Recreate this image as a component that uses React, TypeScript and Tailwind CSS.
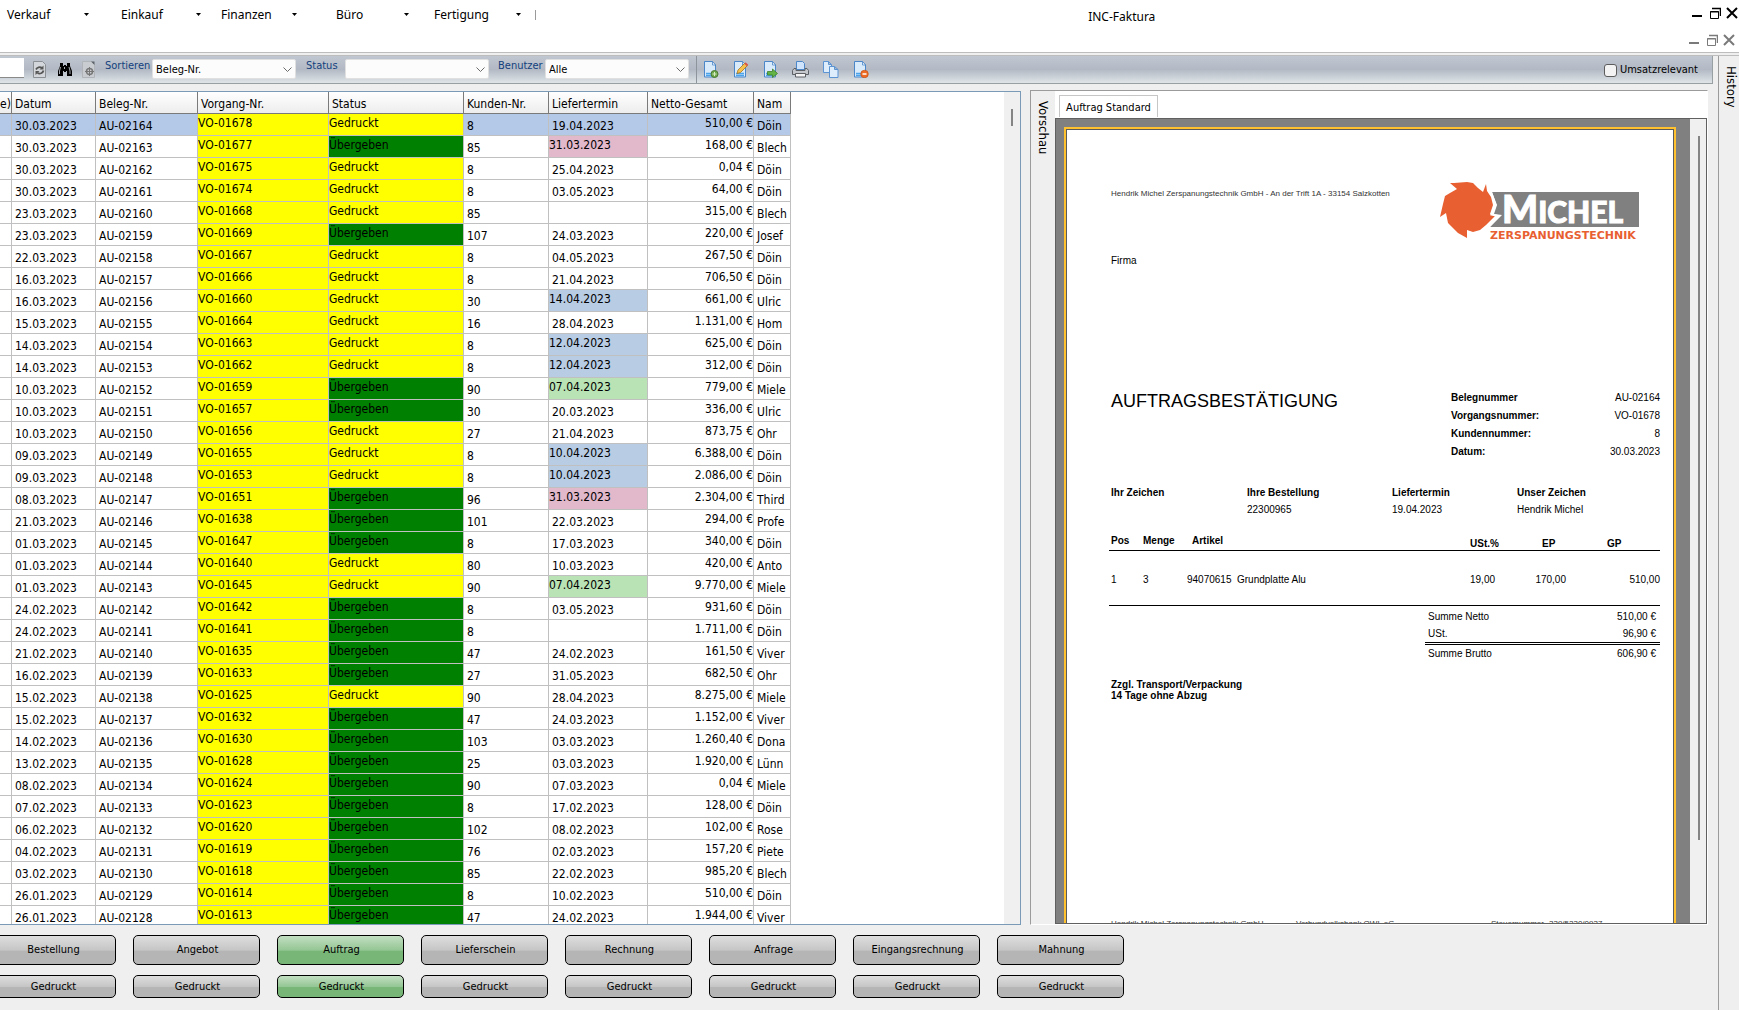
import type { ReactNode } from 'react';

type Row = [string, string, string, 'G' | 'U', string, string, string, string, ('pink' | 'blue' | 'green')?];

const ROWS: Row[] = [
  ['30.03.2023', '02164', '01678', 'G', '8', '19.04.2023', '510,00', 'Döin'],
  ['30.03.2023', '02163', '01677', 'U', '85', '31.03.2023', '168,00', 'Blech', 'pink'],
  ['30.03.2023', '02162', '01675', 'G', '8', '25.04.2023', '0,04', 'Döin'],
  ['30.03.2023', '02161', '01674', 'G', '8', '03.05.2023', '64,00', 'Döin'],
  ['23.03.2023', '02160', '01668', 'G', '85', '', '315,00', 'Blech'],
  ['23.03.2023', '02159', '01669', 'U', '107', '24.03.2023', '220,00', 'Josef'],
  ['22.03.2023', '02158', '01667', 'G', '8', '04.05.2023', '267,50', 'Döin'],
  ['16.03.2023', '02157', '01666', 'G', '8', '21.04.2023', '706,50', 'Döin'],
  ['16.03.2023', '02156', '01660', 'G', '30', '14.04.2023', '661,00', 'Ulric', 'blue'],
  ['15.03.2023', '02155', '01664', 'G', '16', '28.04.2023', '1.131,00', 'Hom'],
  ['14.03.2023', '02154', '01663', 'G', '8', '12.04.2023', '625,00', 'Döin', 'blue'],
  ['14.03.2023', '02153', '01662', 'G', '8', '12.04.2023', '312,00', 'Döin', 'blue'],
  ['10.03.2023', '02152', '01659', 'U', '90', '07.04.2023', '779,00', 'Miele', 'green'],
  ['10.03.2023', '02151', '01657', 'U', '30', '20.03.2023', '336,00', 'Ulric'],
  ['10.03.2023', '02150', '01656', 'G', '27', '21.04.2023', '873,75', 'Ohr'],
  ['09.03.2023', '02149', '01655', 'G', '8', '10.04.2023', '6.388,00', 'Döin', 'blue'],
  ['09.03.2023', '02148', '01653', 'G', '8', '10.04.2023', '2.086,00', 'Döin', 'blue'],
  ['08.03.2023', '02147', '01651', 'U', '96', '31.03.2023', '2.304,00', 'Third', 'pink'],
  ['21.03.2023', '02146', '01638', 'U', '101', '22.03.2023', '294,00', 'Profe'],
  ['01.03.2023', '02145', '01647', 'U', '8', '17.03.2023', '340,00', 'Döin'],
  ['01.03.2023', '02144', '01640', 'G', '80', '10.03.2023', '420,00', 'Anto'],
  ['01.03.2023', '02143', '01645', 'G', '90', '07.04.2023', '9.770,00', 'Miele', 'green'],
  ['24.02.2023', '02142', '01642', 'U', '8', '03.05.2023', '931,60', 'Döin'],
  ['24.02.2023', '02141', '01641', 'U', '8', '', '1.711,00', 'Döin'],
  ['21.02.2023', '02140', '01635', 'U', '47', '24.02.2023', '161,50', 'Viver'],
  ['16.02.2023', '02139', '01633', 'U', '27', '31.05.2023', '682,50', 'Ohr'],
  ['15.02.2023', '02138', '01625', 'G', '90', '28.04.2023', '8.275,00', 'Miele'],
  ['15.02.2023', '02137', '01632', 'U', '47', '24.03.2023', '1.152,00', 'Viver'],
  ['14.02.2023', '02136', '01630', 'U', '103', '03.03.2023', '1.260,40', 'Dona'],
  ['13.02.2023', '02135', '01628', 'U', '25', '03.03.2023', '1.920,00', 'Lünn'],
  ['08.02.2023', '02134', '01624', 'U', '90', '07.03.2023', '0,04', 'Miele'],
  ['07.02.2023', '02133', '01623', 'U', '8', '17.02.2023', '128,00', 'Döin'],
  ['06.02.2023', '02132', '01620', 'U', '102', '08.02.2023', '102,00', 'Rose'],
  ['04.02.2023', '02131', '01619', 'U', '76', '02.03.2023', '157,20', 'Piete'],
  ['03.02.2023', '02130', '01618', 'U', '85', '22.02.2023', '985,20', 'Blech'],
  ['26.01.2023', '02129', '01614', 'U', '8', '10.02.2023', '510,00', 'Döin'],
  ['26.01.2023', '02128', '01613', 'U', '47', '24.02.2023', '1.944,00', 'Viver'],
];

const DUE_STYLES = {
  pink: 'bg-[#e2b8cb]',
  blue: 'bg-[#b8cce4]',
  green: 'bg-[#b9e3b4]',
};

const CELL = 'h-[22px] border-r border-b border-[#c0c0c0] p-0 align-top leading-4 whitespace-nowrap overflow-hidden';
const PLAIN = `${CELL} pl-[3px] pt-1`;
const FLUSH = `${CELL} pt-px`;

const HEADERS = ['e)', 'Datum', 'Beleg-Nr.', 'Vorgang-Nr.', 'Status', 'Kunden-Nr.', 'Liefertermin', 'Netto-Gesamt', 'Nam'];

function OrderTable() {
  return (
    <table className="w-[791px] table-fixed border-separate border-spacing-0 text-xs">
      <colgroup>
        <col className="w-[12px]" />
        <col className="w-[84px]" />
        <col className="w-[102px]" />
        <col className="w-[131px]" />
        <col className="w-[135px]" />
        <col className="w-[85px]" />
        <col className="w-[99px]" />
        <col className="w-[106px]" />
        <col className="w-[37px]" />
      </colgroup>
      <thead>
        <tr>
          {HEADERS.map((h, i) => (
            <th key={h}
              className={`h-[22px] border-r border-b border-[#7a7a7a] bg-linear-to-b from-white to-[#ededed] p-0 pt-[2px] text-left align-middle font-normal whitespace-nowrap ${i ? 'pl-[3px]' : ''}`}>
              {h}
            </th>
          ))}
        </tr>
      </thead>
      <tbody>
        {ROWS.map(([date, doc, job, status, customer, due, net, name, mark], i) => (
          <tr key={doc} className={i === 0 ? 'bg-[#b4c9e8]' : 'bg-white'}>
            <td className={PLAIN}></td>
            <td className={PLAIN}>{date}</td>
            <td className={PLAIN}>AU-{doc}</td>
            <td className={`${FLUSH} bg-[#ffff00]`}>VO-{job}</td>
            <td className={`${FLUSH} ${status === 'G' ? 'bg-[#ffff00]' : 'bg-[#008000]'}`}>
              {status === 'G' ? 'Gedruckt' : 'Übergeben'}
            </td>
            <td className={PLAIN}>{customer}</td>
            <td className={mark ? `${FLUSH} ${DUE_STYLES[mark]}` : PLAIN}>{due}</td>
            <td className={`${FLUSH} text-right`}>{net} €</td>
            <td className={PLAIN}>{name}</td>
          </tr>
        ))}
      </tbody>
    </table>
  );
}

function Menu({ label, className }: { label: string; className: string }) {
  return (
    <button className={`flex items-center justify-between pl-[7px] ${className}`}>
      {label}
      <svg width="5" height="3" viewBox="0 0 5 3"><path d="M0 0h5L2.5 3z" /></svg>
    </button>
  );
}

function WindowControls({ className }: { className: string }) {
  return (
    <div className={`flex items-center gap-[5px] ${className}`}>
      <button aria-label="Minimieren" className="mr-[3px]">
        <svg className="block" width="10" height="12" viewBox="0 0 10 12"><path d="M0 8h10v2H0z" fill="currentColor" /></svg>
      </button>
      <button aria-label="Wiederherstellen">
        <svg className="block" width="11" height="12" viewBox="0 0 11 12" fill="none" stroke="currentColor">
          <path d="M2 1.500h9M10.500 1v8" strokeWidth="1.500" />
          <path d="M.5 4.500h8v7h-8zM0 5h9" />
        </svg>
      </button>
      <button aria-label="Schließen">
        <svg className="block" width="12" height="12" viewBox="0 0 12 12" stroke="currentColor" strokeWidth="2">
          <path d="M1 1l10 10M11 1L1 11" />
        </svg>
      </button>
    </div>
  );
}

function Combo({ label, value, className }: { label: string; value: string; className: string }) {
  return (
    <label className={`flex shrink-0 ${className}`}>
      <span className="mt-[2px] leading-4 text-[#123f7d]">{label}</span>
      <span className="relative ml-auto mt-[3px] block">
        <select defaultValue={value}
          className="block h-5 w-36 appearance-none rounded-xs border border-[#e0e0e0] bg-[#fcfcfc] pt-[2px] pl-[3px] text-black">
          <option>{value}</option>
        </select>
        <svg className="pointer-events-none absolute top-2 right-1" width="9" height="6" viewBox="0 0 9 6" fill="none" stroke="#6b6b6b">
          <path d="M.5 .5l4 4 4-4" />
        </svg>
      </span>
    </label>
  );
}

function Sheet({ children }: { children?: ReactNode }) {
  return (
    <svg width="17" height="17" viewBox="0 0 17 17" fill="none">
      <path d="M2.500 .5h8l3 3.500v12h-11z" fill="#d9ebfb" stroke="#4a86c8" />
      <path d="M10.500 .5v3.500h3z" fill="#fff" stroke="#4a86c8" strokeWidth=".8" />
      <path d="M4 12.500h8M4 14.500h8" stroke="#4ba3ea" strokeWidth="1.500" />
      {children}
    </svg>
  );
}

function ToolButton({ label, children }: { label: string; children: ReactNode }) {
  return <button aria-label={label} className="w-[30px] pl-[5px]">{children}</button>;
}

function Toolbar() {
  return (
    <div className="mr-[5px] flex h-7 items-start border-r border-b border-[#98a0a4] bg-linear-to-b from-[#c1c7d1] via-[#b2b9c4] to-[#dfe5e7] text-[11px]">
      <input aria-label="Suche" className="mt-[2px] h-5 w-6 shrink-0 border-b border-[#8a8a8a] bg-white" />
      <div className="flex h-full w-[76px] items-center justify-between pl-[9px] pr-[5px]">
        <button aria-label="Aktualisieren">
          <svg width="14" height="17" viewBox="0 0 14 17" fill="none">
            <path d="M.5 .5h9l3 3v13h-12z" fill="#d3d6da" stroke="#8b8f94" />
            <path d="M3 8.500a4 4 0 0 1 6-1.500M10.500 9.500a4 4 0 0 1-6 2.500" stroke="#555" strokeWidth="1.800" />
            <path d="M10.500 4.500v4h-4zM2.500 14v-4h4z" fill="#555" />
          </svg>
        </button>
        <button aria-label="Suchen">
          <svg width="16" height="16" viewBox="0 0 16 16">
            <path d="M3 1h3v3h1V3h2v1h1V1h3v3l2 5v5h-5V9H9v1H7V9H6v5H1V9l2-5z" />
            <path d="M3.500 5L2.500 9v3M12 5l1 4v3M7.500 5v2" stroke="#cfd4dc" strokeWidth=".8" fill="none" />
          </svg>
        </button>
        <button aria-label="Einstellungen">
          <svg width="13" height="17" viewBox="0 0 13 17" fill="none">
            <path d="M.5 .5h9l3 3v13h-12z" fill="#c9cdd2" stroke="#b1b5ba" />
            <path d="M9 .5h3.500V4z" fill="#5c6268" />
            <circle cx="7.500" cy="10.500" r="3" stroke="#777" strokeWidth="1.500" />
            <path d="M7.500 6v9M3 10.500h9" stroke="#777" />
          </svg>
        </button>
      </div>
      <Combo label="Sortieren" value="Beleg-Nr." className="ml-[5px] w-[191px]" />
      <Combo label="Status" value="" className="ml-[10px] w-[183px]" />
      <Combo label="Benutzer" value="Alle" className="ml-[9px] w-[191px]" />
      <div className="ml-[7px] flex h-full items-center border-l border-[#8d949c]">
        <ToolButton label="Neu">
          <Sheet><circle cx="12.500" cy="13" r="3.500" fill="#6fa84c" stroke="#4b7a33" /><path d="M12.500 11v4M10.500 13h4" stroke="#d5ecc6" /></Sheet>
        </ToolButton>
        <ToolButton label="Bearbeiten">
          <Sheet><path d="M5 12.500l1-3.500 7-7 2.500 2.500-7 7z" fill="#f6c14c" stroke="#a97418" strokeWidth=".8" /><path d="M13 2l2.500 2.500" stroke="#d9574a" strokeWidth="2" /></Sheet>
        </ToolButton>
        <ToolButton label="Weiterführen">
          <Sheet><path d="M5.500 10.500h5V8l5 4.500-5 4v-2.500h-5z" fill="#62b447" stroke="#3d7e28" strokeWidth=".8" /></Sheet>
        </ToolButton>
        <ToolButton label="Drucken">
          <svg width="17" height="17" viewBox="0 0 17 17">
            <path d="M4.500 .5h6l2 2v6h-8z" fill="#cfe4fa" stroke="#4a86c8" />
            <path d="M2 7.500h2v2h9v-2h2l1.500 2v4h-16v-4z" fill="#c4c7cb" stroke="#5d6166" />
            <path d="M3.500 12.500h10v3.500h-10z" fill="#f4f4f4" stroke="#5d6166" />
          </svg>
        </ToolButton>
        <ToolButton label="Kopieren">
          <svg width="17" height="17" viewBox="0 0 17 17" fill="#deedfc" stroke="#5b93d3">
            <path d="M1.500 .5h5l3 3v8h-8zM6.500 .5v3h3" />
            <path d="M7.500 5.500h5l3.500 3v8H7.500zM12.500 5.500v3H16" />
          </svg>
        </ToolButton>
        <ToolButton label="Löschen">
          <Sheet><circle cx="12.500" cy="13" r="3.800" fill="#ee6b25" stroke="#c04a10" strokeWidth=".6" /><path d="M10.500 13h4" stroke="#fff" strokeWidth="1.500" /></Sheet>
        </ToolButton>
      </div>
      <label className="mt-[6px] mr-[14px] ml-auto flex items-center gap-[3px] leading-4">
        <input type="checkbox" className="size-[13px] appearance-none rounded-[3px] border border-[#5c5c5c] bg-[#f3f3f3]" />
        Umsatzrelevant
      </label>
    </div>
  );
}

function Logo() {
  return (
    <svg className="overflow-visible" width="200" height="60" viewBox="0 0 200 60" role="img" aria-label="Michel Zerspanungstechnik">
      <path d="M52 11h147v35H50l12-12-8-1 3-9z" fill="#808080" />
      <path d="M10 2l4 0 13-1 6 1 5 5 5 4 3-8 1 7 4 6 2 8-3 9 5 2-9 9-6 5-7 2-6-2 0 8-9-5-10-10-2-10-6 4 3-13 2-8 5-3 7-4z" fill="#e85f31" />
      <path d="M51 11l4.500 13-4 9.500 7 1.500-10 11" fill="none" stroke="#fff" strokeWidth="2" />
      <text x="62" y="42" fill="#fff" stroke="#fff" fontFamily="Lato" fontWeight="900" fontSize="38">
        M<tspan fontSize="30">ICHEL</tspan>
      </text>
      <text x="50" y="58" fill="#e85f31" fontFamily="DejaVu Sans" fontWeight="700" fontSize="11">ZERSPANUNGSTECHNIK</text>
    </svg>
  );
}

const META = [
  ['Belegnummer', 'AU-02164'],
  ['Vorgangsnummer:', 'VO-01678'],
  ['Kundennummer:', '8'],
  ['Datum:', '30.03.2023'],
];

const REFS = [
  ['Ihr Zeichen', ''],
  ['Ihre Bestellung', '22300965'],
  ['Liefertermin', '19.04.2023'],
  ['Unser Zeichen', 'Hendrik Michel'],
];

function DocumentPage() {
  return (
    <article className="flex-1 border-2 border-b-0 border-[#ffc12e]">
      <div className="h-full border border-b-0 border-[#5a5a5a] bg-white pt-[51px] pr-[13px] pl-[42px] font-['Liberation_Sans',sans-serif] text-[10px] leading-[17px]">
        <header className="flex justify-between pr-5 pl-[2px]">
          <p className="mt-2 text-[8px] leading-[10px] text-[#333]">
            Hendrik Michel Zerspanungstechnik GmbH - An der Trift 1A - 33154 Salzkotten
          </p>
          <Logo />
        </header>
        <p className="mt-[11px] h-[137px] pl-[2px]">Firma</p>
        <div className="flex justify-between pl-[2px]">
          <h1 className="text-lg leading-6">AUFTRAGSBESTÄTIGUNG</h1>
          <dl className="w-[209px] leading-[18px]">
            {META.map(([k, v]) => (
              <div key={k} className="flex justify-between">
                <dt className="font-bold">{k}</dt>
                <dd>{v}</dd>
              </div>
            ))}
          </dl>
        </div>
        <dl className="mt-[23px] grid grid-cols-[136px_145px_125px_1fr] pl-[2px]">
          {REFS.map(([k, v]) => (
            <div key={k} className="h-[34px]">
              <dt className="font-bold">{k}</dt>
              <dd>{v}</dd>
            </div>
          ))}
        </dl>
        <table className="w-full table-fixed border-separate border-spacing-0 text-left">
          <colgroup>
            <col className="w-[34px]" />
            <col className="w-[44px]" />
            <col className="w-[50px]" />
            <col />
            <col className="w-[34px]" />
            <col className="w-[62px]" />
            <col className="w-[94px]" />
          </colgroup>
          <thead>
            <tr className="h-[33px] align-bottom leading-3">
              <th className="border-b pb-[3px] pl-[2px]">Pos</th>
              <th className="border-b pb-[3px]">Menge</th>
              <th className="border-b pb-[3px] pl-[5px]" colSpan={2}>Artikel</th>
              <th className="border-b">USt.%</th>
              <th className="border-b pl-[38px]">EP</th>
              <th className="border-b pl-[41px]">GP</th>
            </tr>
          </thead>
          <tbody>
            <tr className="h-[55px] align-top">
              <td className="border-b pt-5 pl-[2px]">1</td>
              <td className="border-b pt-5">3</td>
              <td className="border-b pt-5">94070615</td>
              <td className="border-b pt-5">Grundplatte Alu</td>
              <td className="border-b pt-5">19,00</td>
              <td className="border-b pt-5 text-right">170,00</td>
              <td className="border-b pt-5 text-right">510,00</td>
            </tr>
          </tbody>
        </table>
        <dl className="mt-[2px] ml-auto w-[235px]">
          <div className="flex justify-between pr-1 pl-[3px]"><dt>Summe Netto</dt><dd>510,00 €</dd></div>
          <div className="flex justify-between pr-1 pl-[3px]"><dt>USt.</dt><dd>96,90 €</dd></div>
          <div className="flex justify-between border-t-[3px] border-double border-black pr-1 pl-[3px]"><dt>Summe Brutto</dt><dd>606,90 €</dd></div>
        </dl>
        <p className="mt-[17px] pl-[2px] leading-[11px] font-bold">
          Zzgl. Transport/Verpackung<br />14 Tage ohne Abzug
        </p>
        <footer className="mt-[218px] grid grid-cols-[185px_195px_58px_1fr] pl-[2px] text-[8px] leading-[10px] whitespace-nowrap text-[#333]">
          <span>Hendrik Michel Zerspanungstechnik GmbH</span>
          <span>Verbundvolksbank OWL eG</span>
          <span>Steuernummer</span>
          <span>339/5230/0937</span>
        </footer>
      </div>
    </article>
  );
}

const STAGES = ['Bestellung', 'Angebot', 'Auftrag', 'Lieferschein', 'Rechnung', 'Anfrage', 'Eingangsrechnung', 'Mahnung'];

const GRAY = 'from-[#dedede] via-[#c6c6c6] to-[#b5b5b5]';
const GREEN = 'from-[#c2dfc2] via-[#95c695] to-[#78b678]';

function StageButton({ label, active, className }: { label: string; active: boolean; className: string }) {
  return (
    <button className={`w-[127px] rounded-[5px] border border-black bg-linear-to-b via-50% to-55% pt-px pl-[2px] ${active ? GREEN : GRAY} ${className}`}>
      {label}
    </button>
  );
}

export default function App() {
  return (
    <div className="flex h-screen flex-col overflow-hidden bg-[#efefef] font-['DejaVu_Sans_Condensed','DejaVu_Sans',sans-serif] text-black">
      {/* Title and menu bar */}
      <header className="flex h-[53px] shrink-0 border-b border-[#bdbdbd] bg-white font-['Noto_Sans',sans-serif] text-xs">
        <nav className="flex h-[29px] flex-1 items-center">
          <Menu label="Verkauf" className="w-[89px]" />
          <Menu label="Einkauf" className="ml-[25px] w-[87px]" />
          <Menu label="Finanzen" className="ml-[13px] w-[83px]" />
          <Menu label="Büro" className="ml-8 w-[80px]" />
          <Menu label="Fertigung" className="ml-[18px] w-[94px]" />
          <span className="ml-[14px] h-[10px] w-px bg-[#9a9a9a]" />
        </nav>
        <h1 className="mr-1 pt-[9px] leading-4">INC-Faktura</h1>
        <div className="flex w-1/3 flex-col items-end gap-[15px] pt-[7px]">
          <WindowControls className="pr-px" />
          <WindowControls className="pr-1 text-[#7a7a7a]" />
        </div>
      </header>

      <div className="mt-[2px] flex min-h-0 flex-1 border-t border-[#bdbdbd]">
        <div className="flex min-w-0 flex-1 flex-col">
          <Toolbar />

          <main className="mt-[6px] flex min-h-0 flex-1">
            <section className="mt-px flex w-[1021px] shrink-0 justify-between overflow-hidden border-t border-r border-b border-[#7b9ab8] bg-white">
              <div className="flex-1 overflow-hidden"><OrderTable /></div>
              <div className="w-4 shrink-0 bg-[#f0f0f0] pt-[17px]">
                <div className="ml-[7px] h-[17px] w-[2px] bg-[#858585]" />
              </div>
            </section>

            <section className="mr-[10px] ml-[9px] flex min-w-0 flex-1 border border-[#9b9b9b] border-r-white border-b-white">
              <h2 className="w-6 pt-[10px] pr-1 text-[13px] leading-4 [writing-mode:vertical-rl]">Vorschau</h2>
              <div className="flex min-w-0 flex-1 flex-col bg-white">
                <button className="mt-1 mb-px ml-1 h-[22px] w-[99px] self-start border border-b-0 border-[#c6c6c6] pt-[3px] text-[11px]">
                  Auftrag Standard
                </button>
                <div className="flex min-h-0 flex-1 overflow-hidden border border-[#606060]">
                  <div className="flex min-w-0 flex-1 overflow-hidden bg-[#808080] pt-2 pr-[14px] pl-2">
                    <DocumentPage />
                  </div>
                  <div className="w-4 bg-[#f0f0f0] pt-[17px]">
                    <div className="ml-2 h-[704px] w-[2px] bg-[#858585]" />
                  </div>
                </div>
              </div>
            </section>
          </main>

          {/* Document stages with the print buttons below */}
          <div className="mt-[10px] -ml-[11px] mb-3 flex gap-[17px] text-[11px]">
            {STAGES.map((s) => (
              <div key={s} className="flex flex-col gap-[10px]">
                <StageButton label={s} active={s === 'Auftrag'} className="h-[30px]" />
                <StageButton label="Gedruckt" active={s === 'Auftrag'} className="h-[23px]" />
              </div>
            ))}
          </div>
        </div>

        <aside className="w-[21px] shrink-0 border-l border-[#9b9b9b] pt-[10px] pl-1 text-[13px] leading-4">
          <span className="[writing-mode:vertical-rl]">History</span>
        </aside>
      </div>
    </div>
  );
}
